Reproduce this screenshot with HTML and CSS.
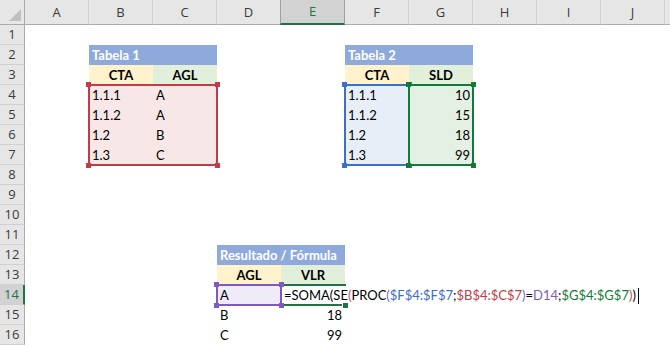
FILE: index.html
```html
<!DOCTYPE html>
<html>
<head>
  <title>Planilha</title>
  <link rel="stylesheet" href="styles.css">
</head>
<body>
  <div class="sheet">
    <div class="corner"></div>
    <div class="colhead">A</div>
    <div class="colhead">B</div>
    <div class="colhead">C</div>
    <div class="colhead">D</div>
    <div class="colhead sel">E</div>
    <div class="colhead">F</div>
    <div class="colhead">G</div>
    <div class="colhead">H</div>
    <div class="colhead">I</div>
    <div class="colhead">J</div>
    <div class="colhead filler"></div>

    <div class="rowhead">1</div>
    <div class="rowhead">2</div>
    <div class="rowhead">3</div>
    <div class="rowhead">4</div>
    <div class="rowhead">5</div>
    <div class="rowhead">6</div>
    <div class="rowhead">7</div>
    <div class="rowhead">8</div>
    <div class="rowhead">9</div>
    <div class="rowhead">10</div>
    <div class="rowhead">11</div>
    <div class="rowhead">12</div>
    <div class="rowhead">13</div>
    <div class="rowhead sel">14</div>
    <div class="rowhead">15</div>
    <div class="rowhead">16</div>

    <!-- Tabela 1 -->
    <div class="title t1-title">Tabela 1</div>
    <div class="hd yellow t1-cta">CTA</div>
    <div class="hd green t1-agl">AGL</div>
    <div class="range red t1-data">
      <span class="h tl"></span><span class="h tr"></span><span class="h bl"></span><span class="h br"></span>
      <div class="cell">1.1.1</div><div class="cell">A</div>
      <div class="cell">1.1.2</div><div class="cell">A</div>
      <div class="cell">1.2</div><div class="cell">B</div>
      <div class="cell">1.3</div><div class="cell">C</div>
    </div>

    <!-- Tabela 2 -->
    <div class="title t2-title">Tabela 2</div>
    <div class="hd yellow t2-cta">CTA</div>
    <div class="hd green t2-sld">SLD</div>
    <div class="range blue t2-cta-data">
      <span class="h tl"></span><span class="h tr"></span><span class="h bl"></span><span class="h br"></span>
      <div class="cell">1.1.1</div>
      <div class="cell">1.1.2</div>
      <div class="cell">1.2</div>
      <div class="cell">1.3</div>
    </div>
    <div class="range grn t2-sld-data">
      <span class="h tl"></span><span class="h tr"></span><span class="h bl"></span><span class="h br"></span>
      <div class="cell num">10</div>
      <div class="cell num">15</div>
      <div class="cell num">18</div>
      <div class="cell num">99</div>
    </div>

    <!-- Resultado -->
    <div class="title t3-title">Resultado / Fórmula</div>
    <div class="hd yellow t3-agl">AGL</div>
    <div class="hd green t3-vlr">VLR</div>
    <div class="range purple t3-sel">
      <span class="h tl"></span><span class="h tr"></span><span class="h bl"></span><span class="h br"></span>
      <div class="cell">A</div>
    </div>
    <div class="cell active t3-active">=SOMA(SE<span class="p1">(</span>PROC<span class="p2">(</span><span class="f-blue">$F$4:$F$7</span>;<span class="f-red">$B$4:$C$7</span><span class="p2">)</span>=<span class="f-purple">D14</span>;<span class="f-green">$G$4:$G$7</span><span class="p1">)</span>)<span class="caret"></span><span class="fill-handle"></span></div>
    <div class="cell t3-b">B</div>
    <div class="cell num t3-18">18</div>
    <div class="cell t3-c">C</div>
    <div class="cell num t3-99">99</div>
  </div>
</body>
</html>
```

FILE: styles.css
```css
body {
  margin: 0;
  background: #fff;
  font-family: Lato, "Liberation Sans", sans-serif;
  font-size: 13px;
  color: #000;
  overflow: hidden;
}

.sheet {
  display: grid;
  grid-template-columns: 25px repeat(10, 64px) 1fr;
  grid-template-rows: 25px repeat(16, 20px);
  width: 670px;
  height: 346px;
}

/* headers */
.corner {
  position: relative;
  background: #e6e6e6;
  border-right: 1px solid #ababab;
  border-bottom: 1px solid #ababab;
}

.corner::after {
  content: "";
  position: absolute;
  right: 3px;
  bottom: 3px;
  width: 12px;
  height: 12px;
  background: #bfbfbf;
  clip-path: polygon(100% 0, 100% 100%, 0 100%);
}

.colhead,
.rowhead {
  background: #e6e6e6;
  font-family: "Open Sans", "Noto Sans", sans-serif;
  font-size: 13px;
  color: #3b3b3b;
  text-align: center;
}

.colhead {
  line-height: 24px;
  border-right: 1px solid #d0d0d0;
  border-bottom: 1px solid #ababab;
}

.colhead.filler {
  border-right: 0;
}

.colhead.sel {
  background: #d2d2d2;
  color: #217346;
  border-left: 1px solid #9f9f9f;
  border-right: 1px solid #9f9f9f;
  margin-left: -1px;
  border-bottom: 2px solid #217346;
  line-height: 23px;
}

.rowhead {
  grid-column: 1;
  line-height: 19px;
  border-bottom: 1px solid #d0d0d0;
  border-right: 1px solid #ababab;
}

.rowhead.sel {
  background: #d2d2d2;
  color: #217346;
  border-right: 2px solid #217346;
}

/* cells */
.cell {
  padding: 0 3px;
  line-height: 20px;
  height: 20px;
  white-space: nowrap;
  color: #000;
}

.num {
  text-align: right;
}

.title {
  background: #8ea9db;
  color: #fff;
  font-weight: bold;
  line-height: 20px;
  padding: 0 3px;
  white-space: nowrap;
  overflow: hidden;
}

.hd {
  font-weight: bold;
  text-align: center;
  line-height: 20px;
}

.yellow {
  background: #fff2cc;
}

.green {
  background: #e2efda;
}

/* reference ranges */
.range {
  --c: #000;
  position: relative;
  display: grid;
  grid-auto-rows: 20px;
  outline: 2px solid var(--c);
  outline-offset: -1px;
}

.range .h {
  position: absolute;
  width: 5px;
  height: 5px;
  background: var(--c);
}

.h.tl { top: -3px; left: -3px; }
.h.tr { top: -3px; right: -3px; }
.h.bl { bottom: -3px; left: -3px; }
.h.br { bottom: -3px; right: -3px; }

.red {
  --c: #c23b47;
  background: #f7e7e7;
}

.blue {
  --c: #3a70c8;
  background: #e8eef8;
  z-index: 1;
}

.grn {
  --c: #117c37;
  background: #e3f0e3;
  z-index: 2;
}

.purple {
  --c: #8059be;
  background: #efebf8;
  z-index: 4;
}

/* placement */
.t1-title { grid-column: 3 / 5; grid-row: 3; }
.t1-cta { grid-column: 3; grid-row: 4; }
.t1-agl { grid-column: 4; grid-row: 4; }
.t1-data { grid-column: 3 / 5; grid-row: 5 / 9; grid-template-columns: 1fr 1fr; }

.t2-title { grid-column: 7 / 9; grid-row: 3; }
.t2-cta { grid-column: 7; grid-row: 4; }
.t2-sld { grid-column: 8; grid-row: 4; }
.t2-cta-data { grid-column: 7; grid-row: 5 / 9; }
.t2-sld-data { grid-column: 8; grid-row: 5 / 9; }

.t3-title { grid-column: 5 / 7; grid-row: 13; }
.t3-agl { grid-column: 5; grid-row: 14; }
.t3-vlr { grid-column: 6; grid-row: 14; }
.t3-sel { grid-column: 5; grid-row: 15; }
.t3-active { grid-column: 6; grid-row: 15; }
.t3-b { grid-column: 5; grid-row: 16; }
.t3-18 { grid-column: 6; grid-row: 16; }
.t3-c { grid-column: 5; grid-row: 17; }
.t3-99 { grid-column: 6; grid-row: 17; }

/* cell in edit mode */
.active {
  position: relative;
  z-index: 3;
}

.active::before {
  content: "";
  position: absolute;
  top: -1px;
  left: -1px;
  right: -1px;
  bottom: -1px;
  border: 2px solid #217346;
  border-right: 0;
}

.fill-handle {
  position: absolute;
  right: -3px;
  bottom: -3px;
  width: 5px;
  height: 5px;
  background: #217346;
  box-shadow: 0 0 0 1px #fff;
}

.caret {
  display: inline-block;
  width: 1px;
  height: 16px;
  margin-left: 2px;
  background: #000;
  vertical-align: -4px;
}

.p1 { color: #c0504d; }
.p2 { color: #7f68c4; }
.f-blue { color: #3a70c8; }
.f-red { color: #c23b47; }
.f-purple { color: #8059be; }
.f-green { color: #117c37; }
```
